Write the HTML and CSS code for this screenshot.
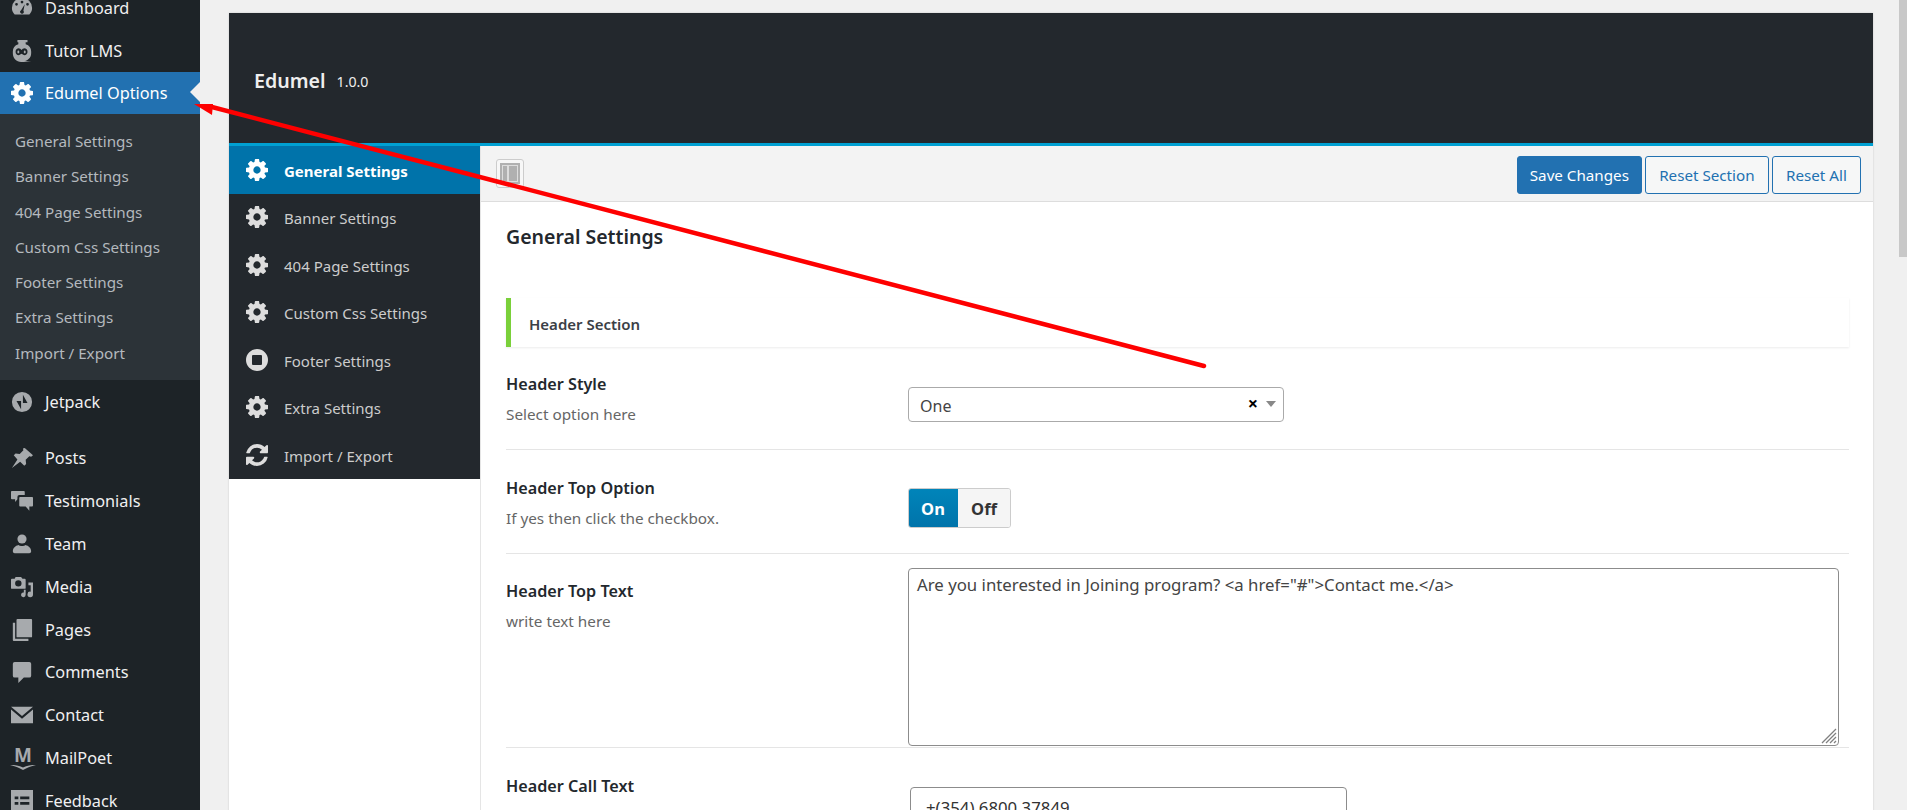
FILE: index.html
```html
<!DOCTYPE html>
<html>
<head>
  <meta http-equiv="content-type" content="text/html; charset=utf-8" />
  <title>Edumel Options</title>
  <link rel="stylesheet" href="styles.css">
</head>
<body>

<svg class="defs" width="0" height="0">
  <symbol id="cog" viewBox="128 128 1536 1536"><path d="M1152 896q0-106-75-181t-181-75-181 75-75 181 75 181 181 75 181-75 75-181zm512-109v222q0 12-8 23t-20 13l-185 28q-19 54-39 91 35 50 107 138 10 12 10 25t-9 23q-27 37-99 108t-94 71q-12 0-26-9l-138-108q-44 23-91 38-16 136-29 186-7 28-36 28h-222q-14 0-24.500-8.500t-11.500-21.500l-28-184q-49-16-90-37l-141 107q-10 9-25 9-14 0-25-11-126-114-165-168-7-10-7-23 0-12 8-23 15-21 51-66.500t54-70.500q-27-50-41-99l-183-27q-13-2-21-12.500t-8-23.500v-222q0-12 8-23t19-13l186-28q14-46 39-92-40-57-107-138-10-12-10-24 0-10 9-23 26-36 98.500-107.500t94.500-71.500q13 0 26 10l138 107q44-23 91-38 16-136 29-186 7-28 36-28h222q14 0 24.500 8.500t11.500 21.500l28 184q49 16 90 37l142-107q9-9 24-9 13 0 25 10 129 119 165 170 7 8 7 22 0 12-8 23-15 21-51 66.500t-54 70.500q26 50 41 98l183 28q13 2 21 12.500t8 23.500z"/></symbol>
  <symbol id="refresh" viewBox="128 128 1536 1536"><path d="M1639 1056q0 5-1 7-64 268-268 434.500t-478 166.500q-146 0-282.500-55t-243.500-157l-129 129q-19 19-45 19t-45-19-19-45v-448q0-26 19-45t45-19h448q26 0 45 19t19 45-19 45l-137 137q71 66 161 102t187 36q134 0 250-65t186-179q11-17 53-117 8-23 30-23h192q13 0 22.500 9.500t9.500 22.500zm25-800v448q0 26-19 45t-45 19h-448q-26 0-45-19t-19-45 19-45l138-138q-148-137-349-137-134 0-250 65t-186 179q-11 17-53 117-8 23-30 23h-199q-13 0-22.500-9.500t-9.500-22.500v-7q65-268 270-434.500t480-166.500q146 0 284 55.500t245 156.500l130-129q19-19 45-19t45 19 19 45z"/></symbol>
  <symbol id="stopo" viewBox="0 0 22 22"><path fill-rule="evenodd" d="M11 0a11 11 0 1 0 0 22a11 11 0 1 0 0-22zM6 7a1 1 0 0 1 1-1h8a1 1 0 0 1 1 1v8a1 1 0 0 1-1 1H7a1 1 0 0 1-1-1z"/></symbol>
</svg>

<div class="wrap">

  <div class="adminmenu">
    <div class="menuitem first">
      <svg class="micon" viewBox="0 0 24 24"><path fill-rule="evenodd" d="M12 1a11 11 0 0 0-11 11c0 3 1 5 3 7h16c2-2 3-4 3-7a11 11 0 0 0-11-11zM12 4a1.500 1.500 0 1 1 0 3a1.500 1.500 0 1 1 0-3zM6 6.500a1.500 1.500 0 1 1 0 3a1.500 1.500 0 1 1 0-3zM18 6.500a1.500 1.500 0 1 1 0 3a1.500 1.500 0 1 1 0-3zM15 8l-1.500 7a2 2 0 1 1-2.500-.5z"/></svg>
      <span>Dashboard</span>
    </div>
    <div class="menuitem tight">
      <svg class="micon" viewBox="0 0 24 24"><path fill-rule="evenodd" d="M7 0h11v2.500h-2v2c4 1 6 4 6 8v2c0 5-4 8.500-8 8.500l8 1H11c-5 0-9-4-9-9.500v-2c0-4 2-7 6-8v-2H7zM8 9a4 4 0 0 0-3 4c0 2 1.500 3.500 3.500 3.500l3-1.500 3 1.500c2 0 3.500-1.500 3.500-3.500a4 4 0 0 0-3-4c-1.500 0-3 1-3.500 2C11 10 9.500 9 8 9zM8 11.500a1 1 0 0 1 1 1v1a1 1 0 0 1-2 0v-1a1 1 0 0 1 1-1zM15 11.500a1 1 0 0 1 1 1v1a1 1 0 0 1-2 0v-1a1 1 0 0 1 1-1z"/></svg>
      <span>Tutor LMS</span>
    </div>
    <div class="menuitem tight current">
      <svg class="micon"><use href="#cog"/></svg>
      <span>Edumel Options</span>
    </div>
    <div class="submenu">
      <a>General Settings</a>
      <a>Banner Settings</a>
      <a>404 Page Settings</a>
      <a>Custom Css Settings</a>
      <a>Footer Settings</a>
      <a>Extra Settings</a>
      <a>Import / Export</a>
    </div>
    <div class="menuitem jetpack">
      <svg class="micon" viewBox="0 0 24 24"><path fill-rule="evenodd" d="M12 1a11 11 0 1 0 0 22a11 11 0 1 0 0-22zM13 4v9h5zM11 20v-9H6z"/></svg>
      <span>Jetpack</span>
    </div>
    <div class="menuitem">
      <svg class="micon" viewBox="0 0 24 24"><path d="M15 1l9 8-2 1.500-2-.5-4 4 .5 4.500-2 2-4.500-4.500L1 23l6-9.500L3 9l2-2 4.500.5 4-4-.5-2z"/></svg>
      <span>Posts</span>
    </div>
    <div class="menuitem">
      <svg class="micon" viewBox="0 0 24 24"><path d="M1 1h13a1 1 0 0 1 1 1v3.500H9a2 2 0 0 0-2 2V10l-2.500 3v-3H1a1 1 0 0 1-1-1V2a1 1 0 0 1 1-1z"/><path d="M10 7.500h13a1 1 0 0 1 1 1V17a1 1 0 0 1-1 1h-3v4.500L16 18h-6a1 1 0 0 1-1-1V8.500a1 1 0 0 1 1-1z"/></svg>
      <span>Testimonials</span>
    </div>
    <div class="menuitem">
      <svg class="micon" viewBox="0 0 24 24"><circle cx="12" cy="6.500" r="5"/><path d="M2 20c0-4 3-6 6-7 2 1.500 6 1.500 8 0 3 1 6 3 6 7 0 1.500-1 2-2 2H4c-1 0-2-.5-2-2z"/></svg>
      <span>Team</span>
    </div>
    <div class="menuitem">
      <svg class="micon" viewBox="0 0 24 24"><path fill-rule="evenodd" d="M5 1h6l1.500 2H15a1 1 0 0 1 1 1v9a1 1 0 0 1-1 1H1a1 1 0 0 1-1-1V4a1 1 0 0 1 1-1h3zM8 4.500a3.500 3.500 0 1 0 0 7a3.500 3.500 0 1 0 0-7z"/><path d="M17 7h7v13a3 3 0 1 1-2.500-2.900V10H19V7z"/><path d="M14 15h2v5.500a2.500 2.500 0 1 1-2-2.400z"/></svg>
      <span>Media</span>
    </div>
    <div class="menuitem">
      <svg class="micon" viewBox="0 0 24 24"><path d="M7 0h15a1 1 0 0 1 1 1v18a1 1 0 0 1-1 1H7a1 1 0 0 1-1-1V1a1 1 0 0 1 1-1z"/><path d="M2 4h2.500v17.500H19V24H3a1 1 0 0 1-1-1z"/></svg>
      <span>Pages</span>
    </div>
    <div class="menuitem">
      <svg class="micon" viewBox="0 0 24 24"><path d="M4 1h16a2 2 0 0 1 2 2v13a2 2 0 0 1-2 2h-6l-6 6v-6H4a2 2 0 0 1-2-2V3a2 2 0 0 1 2-2z"/></svg>
      <span>Comments</span>
    </div>
    <div class="menuitem">
      <svg class="micon" viewBox="0 0 24 24"><path d="M0 3h24L12 13z"/><path d="M0 6l12 10L24 6v15H0z"/></svg>
      <span>Contact</span>
    </div>
    <div class="menuitem">
      <span class="mailpoet"><b>M</b><svg viewBox="0 0 26 6"><path d="M0 1c5 0 9 .5 13 2.500C17 1.500 21 1 26 1c-4 1-7 2-9 3l-4 2-4-2C7 3 4 2 0 1z"/></svg></span>
      <span>MailPoet</span>
    </div>
    <div class="menuitem">
      <svg class="micon" viewBox="0 0 24 24"><path fill-rule="evenodd" d="M0 0h24v24H0zM4 7v3h4V7zM10 7v3h10V7zM4 13v3h4v-3zM10 13v3h10v-3z"/></svg>
      <span>Feedback</span>
    </div>
  </div>

  <div class="main">
    <div class="panel">
      <div class="panelhead">
        <span class="themename">Edumel</span>
        <span class="version">1.0.0</span>
      </div>

      <div class="panelbody">
        <div class="tabs">
          <div class="tab active"><svg class="ticon"><use href="#cog"/></svg>General Settings</div>
          <div class="tab"><svg class="ticon"><use href="#cog"/></svg>Banner Settings</div>
          <div class="tab"><svg class="ticon"><use href="#cog"/></svg>404 Page Settings</div>
          <div class="tab"><svg class="ticon"><use href="#cog"/></svg>Custom Css Settings</div>
          <div class="tab"><svg class="ticon"><use href="#stopo"/></svg>Footer Settings</div>
          <div class="tab"><svg class="ticon"><use href="#cog"/></svg>Extra Settings</div>
          <div class="tab"><svg class="ticon"><use href="#refresh"/></svg>Import / Export</div>
        </div>

        <div class="content">
          <div class="toolbar">
            <div class="expand"><span class="expandin"><i></i><i></i></span></div>
            <div class="buttons">
              <button class="btn primary">Save Changes</button>
              <button class="btn">Reset Section</button>
              <button class="btn">Reset All</button>
            </div>
          </div>

          <div class="form">
            <h2>General Settings</h2>

            <div class="sectionhead">Header Section</div>

            <div class="row rowstyle">
              <div class="label"><h4>Header Style</h4><p>Select option here</p></div>
              <div class="field">
                <div class="select">
                  <span>One</span>
                  <span class="clear">&times;</span>
                  <span class="caret"></span>
                </div>
              </div>
            </div>

            <div class="row rowtop">
              <div class="label"><h4>Header Top Option</h4><p>If yes then click the checkbox.</p></div>
              <div class="field">
                <div class="switch"><span class="on">On</span><span class="off">Off</span></div>
              </div>
            </div>

            <div class="row rowtext">
              <div class="label"><h4>Header Top Text</h4><p>write text here</p></div>
              <div class="field">
                <div class="textarea">Are you interested in Joining program? &lt;a href="#"&gt;Contact me.&lt;/a&gt;
                  <svg class="grip" viewBox="0 0 16 16"><path d="M15 1L1 15M15 5L5 15M15 9L9 15M15 13L13 15" fill="none" stroke="#808080" stroke-width="1.300"/></svg>
                </div>
              </div>
            </div>

            <div class="row rowcall">
              <div class="label"><h4>Header Call Text</h4></div>
              <div class="field">
                <div class="textinput">+(354) 6800 37849</div>
              </div>
            </div>
          </div>
        </div>
      </div>
    </div>
  </div>

</div>

<div class="scrollthumb"></div>

<svg class="arrow" width="1907" height="810" viewBox="0 0 1907 810">
  <line x1="210" y1="106.500" x2="1204" y2="366" stroke="#fe0000" stroke-width="4.500" stroke-linecap="round"/>
  <polygon points="194,104 213,104 212,115" fill="#fe0000"/>
</svg>

</body>
</html>
```

FILE: styles.css
```css
html, body {
    margin: 0;
    height: 810px;
    overflow: hidden;
}
body {
    font-family: "Noto Sans", sans-serif;
    font-size: 14px;
    background-color: #f0f0f0;
    color: #23282d;
}
.defs {
    display: block;
    height: 0;
}
.wrap {
    display: flex;
    align-items: flex-start;
}

/* admin menu */
.adminmenu {
    width: 200px;
    height: 810px;
    flex: none;
    background-color: #1d2327;
    color: #f0f0f1;
    font-size: 16.300px;
}
.menuitem {
    display: flex;
    align-items: center;
    height: 42.800px;
}
.menuitem.first {
    margin-top: -14px;
    height: 44px;
}
.menuitem.tight {
    height: 42px;
}
.menuitem.current {
    position: relative;
    background-color: #2271b1;
    color: #fff;
}
.menuitem.current .micon {
    fill: #fff;
}
.menuitem.current::after {
    content: "";
    position: absolute;
    right: 0;
    top: 10px;
    border: 10px solid transparent;
    border-right-color: #f0f0f0;
    border-left-width: 0;
}
.menuitem.jetpack {
    height: 44px;
    margin-bottom: 13px;
}
.micon {
    width: 22px;
    height: 22px;
    flex: none;
    margin: 0 12px 0 11px;
    fill: #a7aaad;
}
.mailpoet {
    width: 26px;
    flex: none;
    margin: 0 9px 0 10px;
    color: #a7aaad;
    text-align: center;
    font-size: 19px;
    line-height: 18px;
}
.mailpoet b {
    display: block;
}
.mailpoet svg {
    display: block;
    width: 26px;
    height: 6px;
    fill: #a7aaad;
}
.submenu {
    background-color: #2c3338;
    color: #b4b9be;
    font-size: 15.200px;
    padding: 10px 0 9px;
}
.submenu a {
    display: block;
    height: 35.300px;
    line-height: 35.300px;
    padding-left: 15px;
}

/* options panel */
.main {
    flex: 1;
    padding: 13px 34px 0 29px;
}
.panel {
    background-color: #fff;
    height: 900px;
    box-shadow: 0 0 2px rgba(0, 0, 0, 0.15);
}
.panelhead {
    background-color: #23282d;
    border-bottom: 3px solid #00a0d2;
    color: #eee;
    display: flex;
    align-items: center;
    padding: 4px 0 0 25px;
    height: 126px;
}
.themename {
    font-size: 19.600px;
    font-weight: 600;
    margin-right: 11px;
}
.version {
    font-size: 14.200px;
    padding-top: 2px;
}
.panelbody {
    display: flex;
    align-items: flex-start;
}
.tabs {
    width: 251px;
    flex: none;
    background-color: #23282d;
    color: #ccc;
    font-size: 15px;
}
.tab {
    display: flex;
    align-items: center;
    height: 47.500px;
    box-sizing: border-box;
    padding-top: 2px;
}
.tab.active {
    background-color: #0073aa;
    color: #fff;
    font-weight: 700;
}
.ticon {
    width: 22px;
    height: 22px;
    flex: none;
    fill: #ddd;
    margin: -2px 16px 0 17px;
}
.tab.active .ticon {
    fill: #fff;
}
.content {
    flex: 1;
    min-width: 0;
    border-left: 1px solid #e5e5e5;
}
.toolbar {
    display: flex;
    justify-content: space-between;
    align-items: flex-start;
    height: 56px;
    box-sizing: border-box;
    background-color: #f3f3f3;
    border-bottom: 1px solid #ddd;
    padding: 10px 12px 0 15px;
}
.expand {
    width: 28px;
    height: 29px;
    margin-top: 3px;
    box-sizing: border-box;
    border: 1px solid #ccc;
    border-radius: 3px;
    background-color: #f7f7f7;
    padding: 3px;
}
.expandin {
    display: flex;
    gap: 2px;
    height: 100%;
    box-sizing: border-box;
    border: 2px solid #b0b0b0;
    padding: 1px;
    background-color: #ddd;
}
.expandin i {
    flex: 2;
    background-color: #b0b0b0;
}
.expandin i:first-child {
    flex: 1;
}
.buttons {
    display: flex;
    gap: 3px;
}
.btn {
    height: 38px;
    padding: 0 13.200px;
    border: 1px solid #2271b1;
    border-radius: 3px;
    background-color: #f6f7f7;
    color: #2271b1;
    font-family: inherit;
    font-size: 15.200px;
}
.btn.primary {
    padding: 0 12px;
    background-color: #2271b1;
    color: #fff;
}
.form {
    padding: 0 24px 0 25px;
}
h2 {
    margin: 0;
    padding-top: 20px;
    height: 76px;
    font-size: 19.500px;
    font-weight: 600;
    line-height: 30px;
    color: #23282d;
}
.sectionhead {
    height: 49px;
    line-height: 52px;
    box-sizing: border-box;
    border-left: 5px solid #7ad03a;
    padding-left: 18px;
    font-size: 15px;
    font-weight: 600;
    color: #3b4046;
    box-shadow: 0 1px 2px rgba(0, 0, 0, 0.08);
}
.row {
    display: flex;
    border-bottom: 1px solid #e5e5e5;
    box-sizing: border-box;
}
.rowstyle {
    height: 103px;
    padding-top: 24px;
}
.rowtop {
    height: 104px;
    padding-top: 25px;
}
.rowtext {
    height: 194px;
    padding-top: 24px;
}
.rowcall {
    border-bottom: 0;
    padding-top: 25px;
}
.label {
    width: 402px;
    flex: none;
}
h4 {
    margin: 0;
    font-size: 16.200px;
    font-weight: 600;
    line-height: 26px;
    color: #23282d;
}
.label p {
    margin: 6px 0 0;
    font-size: 15.300px;
    line-height: 22px;
    color: #666;
}
.select {
    display: flex;
    align-items: center;
    width: 376px;
    height: 35px;
    box-sizing: border-box;
    margin-top: 16px;
    border: 1px solid #aaa;
    border-radius: 4px;
    padding: 3px 7px 0 11px;
    font-size: 16px;
    color: #444;
}
.select span:first-child {
    flex: 1;
}
.clear {
    color: #000;
    font-weight: 700;
    font-size: 18px;
    line-height: 18px;
    margin: -6px 8px 0 0;
}
.caret {
    margin-top: -5px;
    border: 5px solid transparent;
    border-top: 6px solid #888;
    border-bottom: 0;
}
.switch {
    display: flex;
    width: 103px;
    height: 40px;
    margin-top: 13px;
    box-sizing: border-box;
    border: 1px solid #ccc;
    border-radius: 3px;
    font-size: 16.500px;
    font-weight: 700;
    overflow: hidden;
}
.switch span {
    display: flex;
    align-items: center;
    justify-content: center;
}
.on {
    width: 50px;
    margin: -1px 0 -1px -1px;
    background: linear-gradient(#0085ba, #0073aa);
    color: #fff;
}
.off {
    flex: 1;
    background-color: #f5f5f5;
    color: #333;
}
.textarea {
    position: relative;
    width: 931px;
    height: 178px;
    margin-top: -10px;
    box-sizing: border-box;
    border: 1px solid #8c8c8c;
    border-radius: 4px;
    padding: 4px 8px;
    font-size: 16.800px;
    line-height: 24px;
    color: #444;
}
.grip {
    position: absolute;
    right: 1px;
    bottom: 1px;
    width: 16px;
    height: 16px;
}
.textinput {
    width: 437px;
    height: 40px;
    box-sizing: border-box;
    margin: 14px 0 0 2px;
    border: 1px solid #8c8c8c;
    border-radius: 4px;
    padding: 6px 15px;
    font-size: 16.800px;
    line-height: 28px;
    color: #333;
}

/* things lying over the page */
.scrollthumb {
    position: fixed;
    top: 0;
    right: 0;
    width: 8px;
    height: 257px;
    background-color: #c8c8c8;
}
.arrow {
    position: absolute;
    top: 0;
    left: 0;
    pointer-events: none;
}
```
